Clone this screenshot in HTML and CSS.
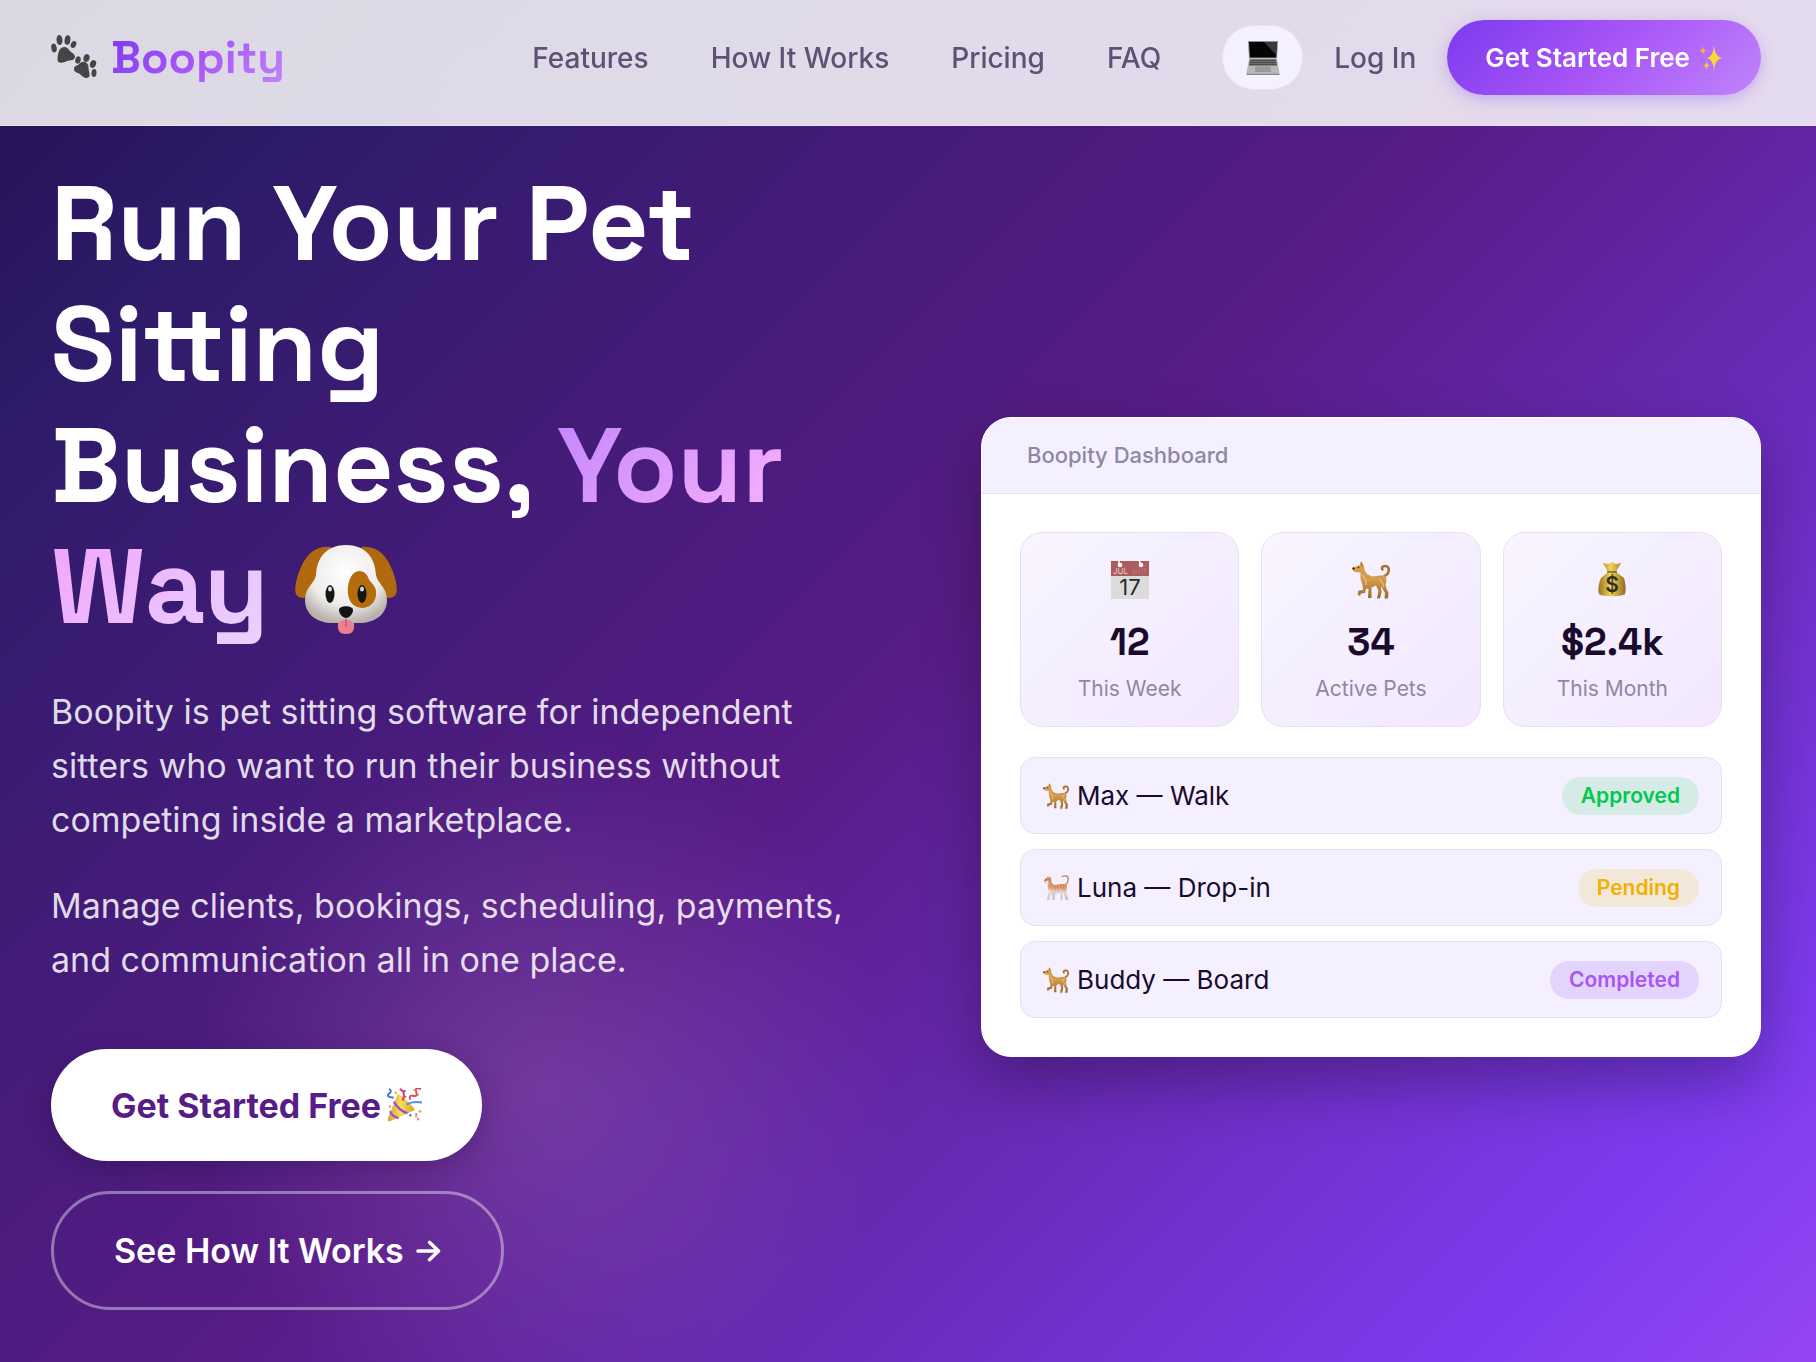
FILE: index.html
```html
<!DOCTYPE html>
<html lang="en">
<head>
    <meta charset="UTF-8">
    <meta name="viewport" content="width=device-width, initial-scale=1.0">
    <title>Boopity - Pet Sitting Software</title>
    <link rel="stylesheet" href="styles.css">
</head>
<body>
    <!-- shared icons -->
    <svg class="sprite" aria-hidden="true">
        <defs>
            <linearGradient id="tan" x1="0" y1="0" x2="0" y2="1">
                <stop offset="0" stop-color="#d69c4a"/>
                <stop offset=".5" stop-color="#d39c4d"/>
                <stop offset="1" stop-color="#96692f"/>
            </linearGradient>
            <linearGradient id="gold" x1="0" y1="0" x2="1" y2="0">
                <stop offset="0" stop-color="#9a7420"/>
                <stop offset=".45" stop-color="#efd25f"/>
                <stop offset="1" stop-color="#93691c"/>
            </linearGradient>
            <linearGradient id="cone" x1="0" y1="0" x2="1" y2="0">
                <stop offset="0" stop-color="#d9a52b"/>
                <stop offset=".5" stop-color="#f8dc55"/>
                <stop offset="1" stop-color="#dba32a"/>
            </linearGradient>
            <linearGradient id="cat" x1="0" y1="0" x2="0" y2="1">
                <stop offset="0" stop-color="#cf8450"/>
                <stop offset=".45" stop-color="#de9a6c"/>
                <stop offset=".65" stop-color="#dfd3cc"/>
                <stop offset="1" stop-color="#c4bebb"/>
            </linearGradient>
            <radialGradient id="face" cx=".5" cy=".35" r=".65">
                <stop offset="0" stop-color="#ffffff"/>
                <stop offset=".65" stop-color="#efedeb"/>
                <stop offset="1" stop-color="#b9b2ac"/>
            </radialGradient>
        </defs>
        <symbol id="icon-dog" viewBox="0 0 38 38">
            <path d="M32.500 15C38 12.500 38 5 33.500 5 30.500 5 29 6.500 30.500 8.500" fill="none" stroke="#a8702f" stroke-width="2.500" stroke-linecap="round"/>
            <path d="M1 7L5 5 8 4 8.800 0 11.500 4 12.500 9 15 13 20 15.500 28 14.500 33 14.500C35 17 35 20 33.500 23.500L34.500 28 36.500 31.500 36 37.500H32.500L33 32 29 25 29.500 31.500 28 37.500H25L26.500 30 24 24.500 19.500 26.500 19.500 37H16L16.500 28 14 27.500 13 32 9 32.500 8 35 5.500 33.500 6.500 29.500 11 29 10.500 24 8.500 18 8.500 11.500 3 11 1 9.500Z" fill="url(#tan)"/>
            <path d="M11 14L14 20 14 24M28 18L30.500 22 32 26" fill="none" stroke="#e8b96f" stroke-width="1.500"/>
            <path d="M9.500 1.500L10 5" stroke="#8d5e28" stroke-width="1"/>
            <circle cx="6.500" cy="6.500" r=".8" fill="#2b1c0d"/>
            <circle cx="1.500" cy="7.500" r="1.200" fill="#3a2413"/>
        </symbol>
        <symbol id="icon-cat" viewBox="0 0 38 38">
            <path d="M33 14C38 11 38 2.500 34 1.500 32 1 30 1.200 28 2" fill="none" stroke="#c98659" stroke-width="2" stroke-linecap="round"/>
            <path d="M1.500 8L3 5.500 6 4.500 7 1.500 9 4 11 2.500 12 6 12.500 11 16 14.500 26 13 32 13 35 15 35 22 34 27 37 35 36 37 33 36.500 31 29 28 24 29 32 28 36 25.500 36 26 26 18 27 17 36 14 37 13 27 11 28 9 36 6 37 6.500 34 8 24 7 17 7 11 2 10.500Z" fill="url(#cat)"/>
            <path d="M3 9L8 8 8 16 11 26 8 30 9 17 6 11Z" fill="#eeeae7"/>
            <path d="M17 16L18 21M21 15L22 21M25 15L27 21M30 15L31 23" stroke="#c06a33" stroke-width="1.500" opacity=".6"/>
            <circle cx="4.500" cy="7" r=".9" fill="#3b5146"/>
        </symbol>
    </svg>

    <header class="navbar">
        <a class="logo" href="#">
            <svg class="logo-icon" viewBox="0 0 46 50" aria-hidden="true">
                <g fill="#464444">
                    <!-- left paw -->
                    <path d="M8 18C10 13 16 13 18 17 20 20 24 20 24 24 23 28 19 27 16 28 12 30 7 31 6.500 27 6.500 23 7 21 8 18Z"/>
                    <ellipse cx="3" cy="15" rx="2.700" ry="4.500" transform="rotate(-10 3 15)"/>
                    <ellipse cx="8.500" cy="7" rx="3" ry="5" transform="rotate(-5 8.500 7)"/>
                    <ellipse cx="16.500" cy="7" rx="2.900" ry="4.800" transform="rotate(8 16.500 7)"/>
                    <ellipse cx="22.500" cy="11.500" rx="2.600" ry="3.600" transform="rotate(28 22.500 11.500)"/>
                    <!-- right paw -->
                    <path d="M29 30C33 27 38 30 37.500 35 37.500 38 39 40 38.500 43 36 47 32 44 30 42 27 39 23 40 23 36 23 32 27 33 29 30Z"/>
                    <ellipse cx="27" cy="27" rx="2.700" ry="3.700" transform="rotate(15 27 27)"/>
                    <ellipse cx="35.500" cy="25" rx="3" ry="4" transform="rotate(18 35.500 25)"/>
                    <ellipse cx="42" cy="31" rx="3" ry="4" transform="rotate(20 42 31)"/>
                    <ellipse cx="43" cy="40" rx="2.500" ry="4" transform="rotate(5 43 40)"/>
                </g>
            </svg>
            <span class="logo-text">Boopity</span>
        </a>
        <nav class="nav-links">
            <a href="#features">Features</a>
            <a href="#how">How It Works</a>
            <a href="#pricing">Pricing</a>
            <a href="#faq">FAQ</a>
        </nav>
        <div class="nav-actions">
            <button class="theme-toggle" type="button" aria-label="Toggle theme">
                <svg viewBox="0 0 34 34" aria-hidden="true">
                    <path d="M2 0H32L31 17.500H3Z" fill="#8d8d8d"/>
                    <path d="M3 1H31L30 16.500H4Z" fill="#050505"/>
                    <path d="M18 1H31L30.200 14Z" fill="#3a3a3a"/>
                    <path d="M3 17.500H31L33.500 32.500H.500Z" fill="#b7b7b7"/>
                    <path d="M4 18.500H30L31 24.500H3Z" fill="#4d4d4d"/>
                    <path d="M4 20.500H30M3.500 22.500H30.500" stroke="#8d8d8d" stroke-width=".5"/>
                    <path d="M9.500 25.500H24.500L25 31H9Z" fill="#999"/>
                    <path d="M.500 32.500H33.500V34H.500Z" fill="#858585"/>
                </svg>
            </button>
            <a class="login" href="#login">Log In</a>
            <a class="btn-nav" href="#signup">
                Get Started Free
                <svg viewBox="0 0 24 26" aria-hidden="true">
                    <path d="M15 0Q15.500 11.500 23 13 15.500 14.500 15 26 14.500 14.500 8 13 14.500 11.500 15 0Z" fill="#fdd835"/>
                    <path d="M4 1Q4.400 5 7.500 5.500 4.400 6 4 10 3.600 6 .500 5.500 3.600 5 4 1Z" fill="#fbb03b"/>
                    <path d="M7.500 16Q7.900 20 11 20.500 7.900 21 7.500 25 7.100 21 4 20.500 7.100 20 7.500 16Z" fill="#fdc435"/>
                </svg>
            </a>
        </div>
    </header>

    <main class="hero">
        <section class="hero-content">
            <h1>Run Your Pet<br>Sitting<br>Business, <span class="highlight">Your<br>Way</span>
                <svg class="dog-face" viewBox="0 0 102 90" aria-hidden="true">
                    <path d="M36 2C20 0 10 10 4 27 0 38-2 50 4 52 14 56 22 46 24 34L32 10Z" fill="#b0690e"/>
                    <path d="M66 2C82 0 92 10 98 27 102 38 104 50 98 52 88 56 80 46 78 34L70 10Z" fill="#b0690e"/>
                    <path d="M51 0C32 0 22 12 21 30 20 38 10 42 10 55 10 71 25 79 40 78H62C77 79 92 71 92 55 92 42 82 38 81 30 80 12 70 0 51 0Z" fill="url(#face)"/>
                    <path d="M65 26C55 26 52 40 53 49 54 58 60 63 68 63 77 62 82 55 81 46 80 39 74 37 73 32 71 28 68 26 65 26Z" fill="#b56c0d"/>
                    <ellipse cx="35" cy="49" rx="4.500" ry="9" fill="#161616"/>
                    <ellipse cx="67" cy="49" rx="4.500" ry="9" fill="#161616"/>
                    <ellipse cx="35" cy="44" rx="2" ry="2.500" fill="#d8d8d8"/>
                    <ellipse cx="67" cy="44" rx="2" ry="2.500" fill="#d8d8d8"/>
                    <path d="M43 78C42 86 45 89 51 89 57 89 60 86 59 78Q51 71 43 78Z" fill="#e98090"/>
                    <path d="M51 74V82" stroke="#c65d72" stroke-width="1.500"/>
                    <path d="M44 65C44 60 58 60 58 65 58 69 54 73 51 73 48 73 44 69 44 65Z" fill="#141414"/>
                </svg>
            </h1>
            <p>Boopity is pet sitting software for independent sitters who want to run their business without competing inside a marketplace.</p>
            <p>Manage clients, bookings, scheduling, payments, and communication all in one place.</p>
            <div class="hero-buttons">
                <a class="btn btn-primary" href="#signup">
                    Get Started Free
                    <svg viewBox="0 0 36 36" aria-hidden="true">
                        <path d="M11 6Q17 8 28 21 29 23 26 24L4 34Q0 35 1 31Z" fill="url(#cone)"/>
                        <path d="M7 14Q12 23 21 26M3 24Q6 30 12 31" fill="none" stroke="#9b4be0" stroke-width="2.200"/>
                        <path d="M2 1Q6 3 2 6T7 10" fill="none" stroke="#3d79d8" stroke-width="2"/>
                        <path d="M13 1Q20 4 16 13" fill="none" stroke="#ee4266" stroke-width="2.200"/>
                        <path d="M20 17Q27 13 36 15" fill="none" stroke="#4c8fe6" stroke-width="2"/>
                        <path d="M24 12Q22 7 27 8T30 4 35 1" fill="none" stroke="#d94a68" stroke-width="2"/>
                        <g fill="#3d79d8"><circle cx="18" cy="3" r="1.200"/><circle cx="19" cy="9" r="1"/><circle cx="24" cy="28" r="1.200"/><circle cx="30" cy="27" r="1"/></g>
                        <g fill="#e9b13c"><circle cx="9" cy="5" r="1.300"/><circle cx="28" cy="2" r="1.200"/><circle cx="34" cy="24" r="1.500"/><circle cx="30" cy="29" r="1.300"/></g>
                        <g fill="#e78aa2"><circle cx="32" cy="32" r="1.500"/><circle cx="3" cy="19" r="1.200"/><circle cx="32" cy="7" r="1.200"/></g>
                    </svg>
                </a>
                <a class="btn btn-secondary" href="#how">
                    See How It Works
                    <svg class="arrow" viewBox="0 0 26 22" aria-hidden="true">
                        <path d="M2 11H23M14 2L23.500 11 14 20" fill="none" stroke="#fff" stroke-width="3.500" stroke-linecap="round" stroke-linejoin="round"/>
                    </svg>
                </a>
            </div>
        </section>

        <section class="dashboard">
            <div class="dashboard-header">Boopity Dashboard</div>
            <div class="dashboard-body">
                <div class="stats">
                    <div class="stat">
                        <svg class="stat-icon" viewBox="0 0 38 38" aria-hidden="true">
                            <path d="M0 0H38V38H0Z" fill="#dcdcdc"/>
                            <path d="M0 0H38V15H0Z" fill="#ac5b5e"/>
                            <circle cx="9" cy="4" r="2.300" fill="#fff"/>
                            <circle cx="30" cy="4" r="2.300" fill="#fff"/>
                            <path d="M8 0V3M28 0L30 3" stroke="#fff" stroke-width="1.500"/>
                            <path d="M22 8V13M25 8V13M28 8V13M31 7V12M34 7V12" stroke="#bd7a7c" stroke-width="1"/>
                            <text x="2" y="13" font-size="8" fill="#e8cfd0">JUL</text>
                            <text x="19" y="34" font-size="22" text-anchor="middle" fill="#2a2a2a">17</text>
                        </svg>
                        <div class="stat-value">12</div>
                        <div class="stat-label">This Week</div>
                    </div>
                    <div class="stat">
                        <svg class="stat-icon" aria-hidden="true"><use href="#icon-dog"/></svg>
                        <div class="stat-value">34</div>
                        <div class="stat-label">Active Pets</div>
                    </div>
                    <div class="stat">
                        <svg class="stat-icon" viewBox="0 0 38 38" aria-hidden="true">
                            <path d="M10 2L15 3 19 1 23 3 28 2 23 11 31 17C33 24 33 30 32 33 30 36 8 36 6 33 5 30 5 24 8 17L15 11Z" fill="url(#gold)"/>
                            <path d="M14 11H24" stroke="#84601a" stroke-width="1.500"/>
                            <text x="19" y="31" font-size="21" font-weight="600" text-anchor="middle" fill="#33301f">$</text>
                        </svg>
                        <div class="stat-value">$2.4k</div>
                        <div class="stat-label">This Month</div>
                    </div>
                </div>
                <ul class="bookings">
                    <li>
                        <svg aria-hidden="true"><use href="#icon-dog"/></svg>
                        <span>Max — Walk</span>
                        <span class="badge approved">Approved</span>
                    </li>
                    <li>
                        <svg aria-hidden="true"><use href="#icon-cat"/></svg>
                        <span>Luna — Drop-in</span>
                        <span class="badge pending">Pending</span>
                    </li>
                    <li>
                        <svg aria-hidden="true"><use href="#icon-dog"/></svg>
                        <span>Buddy — Board</span>
                        <span class="badge completed">Completed</span>
                    </li>
                </ul>
            </div>
        </section>
    </main>
</body>
</html>
```
FILE: styles.css
```css
* {
    margin: 0;
    padding: 0;
    box-sizing: border-box;
}
body {
    font-family: 'Inter', sans-serif;
    color: #1a0b2e;
    background: #581c87;
}
a {
    color: inherit;
    text-decoration: none;
}
.sprite {
    position: absolute;
    width: 0;
    height: 0;
}

/* Navbar */
.navbar {
    position: fixed;
    top: 0;
    left: 0;
    right: 0;
    z-index: 10;
    display: flex;
    align-items: center;
    padding: 20px 55px 30px 51px;
    background: rgba(255, 255, 255, 0.84);
    border-bottom: 1px solid #e9e3f5;
    backdrop-filter: blur(20px);
}
.logo {
    display: flex;
    align-items: center;
    gap: 14px;
}
.logo-icon {
    width: 46px;
    height: 50px;
}
.logo-text {
    font-family: 'Space Grotesk', 'Inter', sans-serif;
    font-size: 45px;
    line-height: 56px;
    font-weight: 700;
    background: linear-gradient(135deg, #7c3aed, #a855f7, #c084fc);
    -webkit-background-clip: text;
    background-clip: text;
    color: transparent;
}
.nav-links {
    display: flex;
    gap: 62px;
    margin-left: auto;
    font-size: 28px;
    font-weight: 500;
    color: #5b5275;
}
.nav-actions {
    display: flex;
    align-items: center;
    gap: 31px;
    margin-left: 61px;
}
.theme-toggle {
    display: flex;
    align-items: center;
    justify-content: center;
    width: 81px;
    height: 65px;
    border: 1px solid #e9e3f5;
    border-radius: 32px;
    background: #f4f0ff;
    cursor: pointer;
}
.theme-toggle svg {
    width: 34px;
    height: 34px;
}
.login {
    font-size: 28px;
    font-weight: 500;
    color: #5b5275;
}
.btn-nav {
    display: flex;
    align-items: center;
    gap: 9px;
    height: 75px;
    padding: 0 38px;
    border-radius: 38px;
    background: linear-gradient(135deg, #7c3aed, #a855f7 50%, #c084fc);
    box-shadow: 0 4px 15px rgba(124, 58, 237, 0.3);
    font-size: 26px;
    font-weight: 600;
    color: #fff;
}
.btn-nav svg {
    width: 24px;
    height: 26px;
}

/* Hero */
.hero {
    display: grid;
    grid-template-columns: 1fr 1fr;
    gap: 120px;
    align-items: center;
    min-height: 100vh;
    padding: 164px 55px 52px 51px;
    background:
        radial-gradient(circle at 30% 80%, rgba(190, 140, 222, 0.25), transparent 21%),
        linear-gradient(135deg, #260f50 0%, #2d1b69 13%, #581c87 50%, #7c3aed 88%, #9545f4 100%);
}
.hero-content {
    color: #fff;
}
h1 {
    margin-bottom: 37px;
    font-family: 'Space Grotesk', 'Inter', sans-serif;
    font-size: 105px;
    line-height: 121px;
    font-weight: 700;
}
.highlight {
    background: linear-gradient(135deg, #c084fc, #f0abfc, #e9d5ff);
    -webkit-background-clip: text;
    background-clip: text;
    color: transparent;
}
.dog-face {
    width: 102px;
    height: 90px;
    vertical-align: -12px;
}
.hero-content p {
    margin-bottom: 32px;
    font-size: 34px;
    line-height: 54px;
    color: rgba(255, 255, 255, 0.85);
}
.hero-buttons {
    display: flex;
    flex-direction: column;
    align-items: flex-start;
    gap: 30px;
    margin-top: 62px;
}
.btn {
    display: flex;
    align-items: center;
    gap: 6px;
    padding: 0 60px;
    border-radius: 60px;
    font-size: 34px;
}
.btn svg {
    width: 35px;
    height: 35px;
}
.btn-primary {
    height: 112px;
    background: #fff;
    color: #581c87;
    font-weight: 700;
    box-shadow: 0 8px 30px rgba(0, 0, 0, 0.2);
}
.btn-secondary {
    gap: 12px;
    height: 119px;
    border: 3px solid rgba(255, 255, 255, 0.4);
    font-weight: 600;
}
.btn .arrow {
    width: 25px;
    height: 22px;
}

/* Dashboard card */
.dashboard {
    justify-self: end;
    width: 100%;
    max-width: 780px;
    overflow: hidden;
    border: 1px solid #fff;
    border-radius: 30px;
    background: #fff;
    box-shadow: 0 25px 60px rgba(0, 0, 0, 0.3);
}
.dashboard-header {
    padding: 24px 45px;
    border-bottom: 1px solid #e6e0f3;
    background: #f4f0ff;
    font-size: 22px;
    line-height: 27px;
    font-weight: 500;
    color: #8e88a3;
}
.dashboard-body {
    padding: 38px;
}
.stats {
    display: grid;
    grid-template-columns: repeat(3, 1fr);
    gap: 22px;
    margin-bottom: 30px;
}
.stat {
    display: flex;
    flex-direction: column;
    align-items: center;
    padding: 28px 16px 23px;
    border: 1px solid #e6e0f3;
    border-radius: 22px;
    background: linear-gradient(135deg, #faf5ff, #f5f1ff 30%, #f3e8ff);
}
.stat-icon {
    width: 38px;
    height: 38px;
}
.stat-value {
    margin-top: 19px;
    font-family: 'Space Grotesk', 'Inter', sans-serif;
    font-size: 38px;
    line-height: 48px;
    font-weight: 700;
}
.stat-label {
    margin-top: 9px;
    font-size: 21px;
    line-height: 28px;
    color: #8e88a3;
}
.bookings {
    display: grid;
    gap: 15px;
    list-style: none;
}
.bookings li {
    display: flex;
    align-items: center;
    gap: 8px;
    height: 77px;
    padding: 0 22px;
    border: 1px solid #e6e0f3;
    border-radius: 15px;
    background: #f4f0ff;
    font-size: 26px;
}
.bookings svg {
    width: 26px;
    height: 26px;
}
.badge {
    margin-left: auto;
    padding: 0 19px;
    border-radius: 19px;
    font-size: 21px;
    line-height: 38px;
    font-weight: 600;
}
.approved {
    background: #d6ebe6;
    color: #00c951;
}
.pending {
    background: #f3e7da;
    color: #f0b100;
}
.completed {
    background: #e3d4fd;
    color: #a855f7;
}

@media (max-width: 1100px) {
    .nav-links {
        display: none;
    }
    .nav-actions {
        margin-left: auto;
    }
    .hero {
        grid-template-columns: 1fr;
        gap: 60px;
    }
}
```
